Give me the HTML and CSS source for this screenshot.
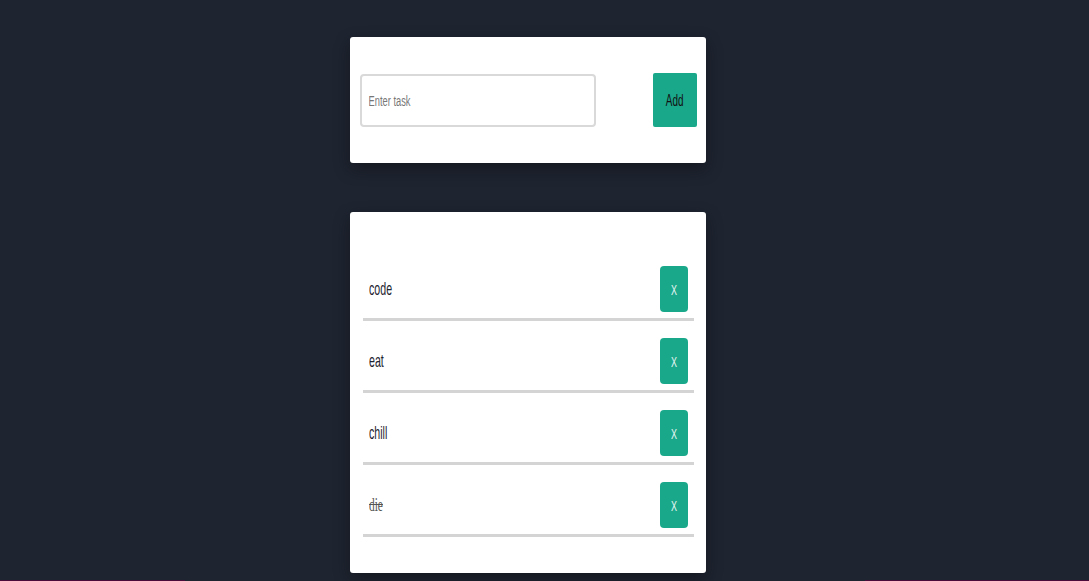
FILE: index.html
```html
<!DOCTYPE html>
<html>
<head>
<meta charset="utf-8">
<link rel="stylesheet" href="styles.css">
</head>
<body>
<main class="app">
  <section class="card add-card">
    <div class="input-box"><input class="task-input" type="text" placeholder="Enter task"></div>
    <button class="add-btn"><span class="narrow">Add</span></button>
  </section>
  <section class="card list-card">
    <ul class="task-list">
      <li class="task"><span class="task-text">code</span><button class="del-btn"><span class="narrow">X</span></button></li>
      <li class="task"><span class="task-text">eat</span><button class="del-btn"><span class="narrow">X</span></button></li>
      <li class="task"><span class="task-text">chill</span><button class="del-btn"><span class="narrow">X</span></button></li>
      <li class="task done"><span class="task-text">die</span><button class="del-btn"><span class="narrow">X</span></button></li>
    </ul>
  </section>
</main>
<div class="bottom-bar"><span class="seg left"></span><span class="seg right"></span></div>
</body>
</html>
```
FILE: styles.css
```css
html, body {
  margin: 0;
  padding: 0;
  background: #1e2430;
  height: 100%;
  overflow: hidden;
}
body {
  font-family: "Liberation Sans", Arial, sans-serif;
  position: relative;
}
.app {
  width: 356px;
  margin: 37px 0 0 350px;
  display: flex;
  flex-direction: column;
  gap: 49px;
}
.card {
  background: #fff;
  border-radius: 3px;
  box-shadow: 0 6px 16px rgba(0,0,0,0.35);
}
.add-card {
  height: 126px;
  box-sizing: border-box;
  display: flex;
  align-items: center;
  padding: 0 9px 0 10px;
  justify-content: space-between;
}
.input-box {
  width: 236px;
  height: 53px;
  box-sizing: border-box;
  border: 2px solid #d9d9d9;
  border-radius: 4px;
  margin-top: 1px;
  overflow: hidden;
  display: flex;
  align-items: center;
}
.task-input {
  flex: none;
  width: calc(100% / 0.6);
  height: 100%;
  box-sizing: border-box;
  border: none;
  background: transparent;
  padding: 0 0 0 11px;
  font-family: inherit;
  font-size: 15.5px;
  color: #333;
  outline: none;
  transform: scaleX(0.6);
  transform-origin: left center;
}
.task-input::placeholder {
  color: #777;
}
.narrow {
  display: inline-block;
  transform: scaleX(0.6);
}
.add-btn {
  width: 44px;
  height: 54px;
  border: none;
  border-radius: 2px;
  background: #1aa88b;
  color: #111;
  font-family: inherit;
  font-size: 16.5px;
  padding: 0;
}
.list-card {
  height: 361px;
  box-sizing: border-box;
  padding: 37px 12px 0 13px;
}
.task-list {
  list-style: none;
  margin: 0;
  padding: 0;
}
.task {
  display: flex;
  align-items: center;
  justify-content: space-between;
  padding: 17px 6px 6px 6px;
  border-bottom: 3px solid #d4d4d4;
}
.task-text {
  display: inline-block;
  font-size: 19px;
  color: #1e2430;
  transform: scaleX(0.56);
  transform-origin: left center;
}
.task.done .task-text {
  color: #555;
  text-decoration: line-through;
  font-family: "Liberation Serif", serif;
  transform: scaleX(0.6);
}
.del-btn {
  width: 28px;
  height: 46px;
  border: none;
  border-radius: 4px;
  background: #1aa88b;
  color: #e8f6f2;
  font-family: inherit;
  font-size: 15px;
  padding: 0;
}
.bottom-bar {
  position: absolute;
  left: 0;
  right: 0;
  bottom: 0;
  height: 1px;
  display: flex;
  justify-content: space-between;
}
.seg {
  height: 1px;
  background: #4a0b3a;
}
.seg.left { width: 185px; }
.seg.right { width: 224px; }
```
